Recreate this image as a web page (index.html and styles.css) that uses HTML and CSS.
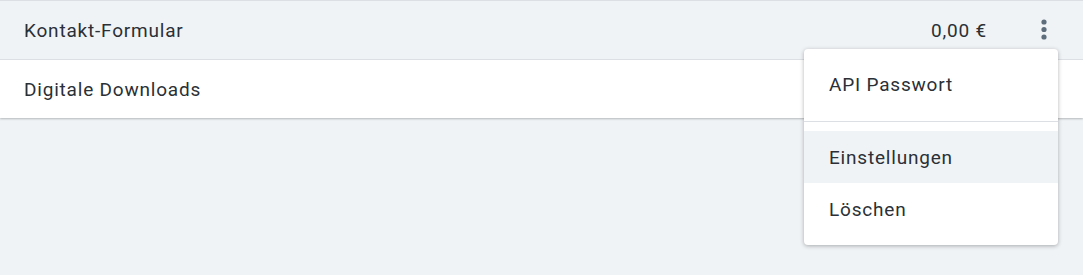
FILE: index.html
```html
<!DOCTYPE html>
<html lang="de">
<head>
    <meta charset="UTF-8">
    <meta name="viewport" content="width=device-width, initial-scale=1.0">
    <title>Formulare</title>
    <link rel="stylesheet" href="styles.css">
</head>
<body>
    <div class="seite">
        <div class="liste">
            <div class="zeile aktiv">
                <span class="name">Kontakt-Formular</span>
                <span class="preis">0,00 €</span>
                <button class="menu-btn" aria-label="Menü">
                    <svg width="6" height="22" viewBox="0 0 6 22">
                        <circle cx="3" cy="3" r="2.6"/>
                        <circle cx="3" cy="10.5" r="2.6"/>
                        <circle cx="3" cy="18" r="2.6"/>
                    </svg>
                </button>
            </div>
            <div class="zeile letzte">
                <span class="name">Digitale Downloads</span>
            </div>
        </div>

        <div class="menu">
            <div class="menu-item">API Passwort</div>
            <div class="menu-trenner"></div>
            <div class="menu-item hover">Einstellungen</div>
            <div class="menu-item">Löschen</div>
        </div>
    </div>
</body>
</html>
```

FILE: styles.css
```css
* {
    margin: 0;
    padding: 0;
    box-sizing: border-box;
    font-family: Roboto, 'Liberation Sans', sans-serif;
}

html, body {
    background: #f0f3f6;
}

body {
    color: #2a3036;
    font-size: 19px;
    letter-spacing: 0.8px;
}

.seite {
    position: relative;
    min-height: 275px;
}

.liste {
    background: white;
    border-top: 1px solid #dcdfe3;
    box-shadow: 0 1px 2px rgba(0, 0, 0, 0.25);
}

.zeile {
    display: flex;
    align-items: center;
    height: 59px;
    padding: 0 19px 0 24px;
    border-bottom: 1px solid #dcdfe3;
}

.zeile.letzte {
    border-bottom: none;
    height: 58px;
}

.zeile.aktiv {
    background: #f0f3f6;
}

.name {
    flex: 1;
}

.preis {
    margin-right: 37px;
}

.menu-btn {
    width: 40px;
    height: 40px;
    background: none;
    border: none;
    display: flex;
    align-items: center;
    justify-content: center;
    cursor: pointer;
}

.menu-btn svg {
    fill: #5d6d7c;
}

.menu {
    position: absolute;
    top: 49px;
    right: 25px;
    width: 254px;
    background: white;
    border-radius: 4px;
    padding: 9px 0 10px;
    box-shadow: 0 1px 4px rgba(0, 0, 0, 0.3);
}

.menu-item {
    height: 52px;
    display: flex;
    align-items: center;
    padding-left: 25px;
}

.menu-item.hover {
    background: #f0f3f6;
}

.menu-trenner {
    height: 1px;
    background: #dcdfe3;
    margin: 11px 0 9px;
}
```
